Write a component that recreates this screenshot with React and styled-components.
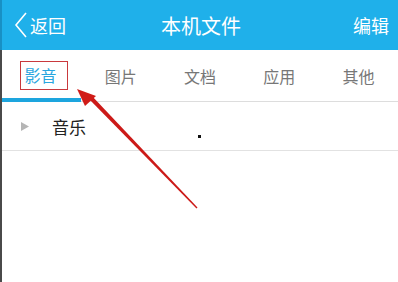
import styled, { createGlobalStyle } from "styled-components";

const GlobalStyle = createGlobalStyle`
  html, body { margin: 0; padding: 0; background: #ffffff; }
  body { font-family: "Noto Sans CJK SC", "Noto Sans", sans-serif; }
`;

const Screen = styled.div`
  position: relative;
  width: 398px;
  height: 282px;
  overflow: hidden;
  background: #ffffff;
`;

const Header = styled.div`
  height: 50px;
  background: #1fb0ea;
  border-left: 2px solid #1890c4;
  display: grid;
  grid-template-columns: 1fr auto 1fr;
  align-items: center;
  color: #ffffff;
`;

const Back = styled.div`
  display: flex;
  align-items: center;
  gap: 2px;
  padding-left: 11px;
  font-size: 18px;
`;

const Title = styled.div`
  font-size: 20px;
  margin-left: 2px;
`;

const Edit = styled.div`
  justify-self: end;
  padding-right: 9px;
  font-size: 18px;
`;

const Body = styled.div`
  border-left: 2px solid #4a4a4a;
  height: 232px;
`;

const Tabs = styled.div`
  display: grid;
  grid-template-columns: repeat(5, 1fr);
  height: 51px;
  border-bottom: 1px solid #dddddd;
`;

const Tab = styled.div`
  position: relative;
  display: flex;
  align-items: center;
  justify-content: center;
  font-size: 16px;
  color: ${(p) => (p.$active ? "#2aa6df" : "#777777")};
  &::after {
    content: "";
    display: ${(p) => (p.$active ? "block" : "none")};
    position: absolute;
    left: 0;
    right: 0;
    bottom: -1px;
    height: 4px;
    background: #1da5de;
  }
`;

const Marked = styled.span`
  padding: 3px 10px 3px 4px;
  margin-left: 4px;
  border: 1px solid #c9393d;
  line-height: 21px;
`;

const Row = styled.div`
  display: flex;
  align-items: center;
  height: 48px;
  border-bottom: 1px solid #e2e2e2;
  padding-left: 19px;
  font-size: 17px;
  color: #222222;
`;

const Caret = styled.svg`
  width: 8px;
  height: 9px;
  margin-right: 23px;
`;

const Dot = styled.div`
  position: absolute;
  left: 198px;
  top: 135px;
  width: 3px;
  height: 3px;
  background: #111111;
`;

const Arrow = styled.svg`
  position: absolute;
  left: 0;
  top: 0;
  pointer-events: none;
`;

const tabs = ["影音", "图片", "文档", "应用", "其他"];

export default function App() {
  return (
    <Screen>
      <GlobalStyle />
      <Header>
        <Back>
          <svg width="15" height="28" viewBox="0 0 15 28">
            <path d="M13 2 L3 14 L13 26" fill="none" stroke="#ffffff" strokeWidth="1.6" />
          </svg>
          返回
        </Back>
        <Title>本机文件</Title>
        <Edit>编辑</Edit>
      </Header>
      <Body>
        <Tabs>
          {tabs.map((t, i) => (
            <Tab key={t} $active={i === 0}>
              {i === 0 ? <Marked>{t}</Marked> : t}
            </Tab>
          ))}
        </Tabs>
        <Row>
          <Caret viewBox="0 0 8 9">
            <path d="M0 0 L8 4.5 L0 9 Z" fill="#b5b5b5" />
          </Caret>
          音乐
        </Row>
      </Body>
      <Dot />
      <Arrow width="398" height="282" viewBox="0 0 398 282">
        <path d="M88.5 98.5 L91.5 95.5 L197.5 207.5 L196.5 208.5 Z" fill="#cc1a18" />
        <path d="M77 89 L96 96 L85 106 Z" fill="#d01c18" />
      </Arrow>
    </Screen>
  );
}
